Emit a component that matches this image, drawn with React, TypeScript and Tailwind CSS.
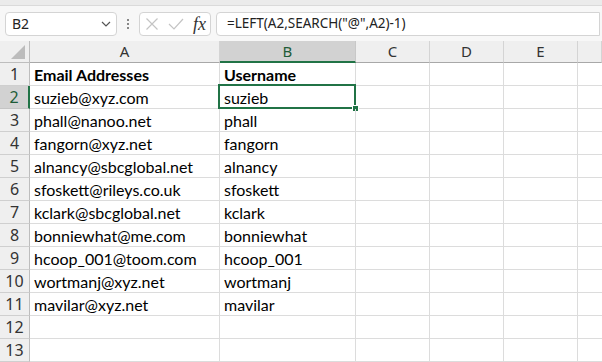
import React from "react";

const rows: [string, string][] = [
  ["Email Addresses", "Username"],
  ["suzieb@xyz.com", "suzieb"],
  ["phall@nanoo.net", "phall"],
  ["fangorn@xyz.net", "fangorn"],
  ["alnancy@sbcglobal.net", "alnancy"],
  ["sfoskett@rileys.co.uk", "sfoskett"],
  ["kclark@sbcglobal.net", "kclark"],
  ["bonniewhat@me.com", "bonniewhat"],
  ["hcoop_001@toom.com", "hcoop_001"],
  ["wortmanj@xyz.net", "wortmanj"],
  ["mavilar@xyz.net", "mavilar"],
  ["", ""],
  ["", ""],
];

const uiFont = { fontFamily: '"Noto Sans", "Open Sans", sans-serif' };
const cellFont = { fontFamily: 'Lato, "Noto Sans", sans-serif' };

export default function App() {
  return (
    <div className="w-[602px] h-[362px] overflow-hidden bg-white text-[#222]">
      <div className="h-[6px] bg-[#ebebeb] border-b border-[#dadada]" />
      <div className="h-[35px] bg-[#f7f7f7] flex items-center pl-[5px] pr-[2px]" style={uiFont}>
        <div className="w-[112px] h-[24px] bg-white border border-[#d4d4d4] rounded-[4px] flex items-center justify-between pl-[6px] pr-[5px]">
          <span className="text-[14px] text-[#222]">B2</span>
          <svg width="10" height="6" viewBox="0 0 10 6">
            <path d="M1 1 L5 5 L9 1" fill="none" stroke="#555" strokeWidth="1.2" />
          </svg>
        </div>
        <div className="w-[22px] flex flex-col items-center gap-[2px]">
          <span className="w-[2px] h-[2px] bg-[#888]" />
          <span className="w-[2px] h-[2px] bg-[#888]" />
          <span className="w-[2px] h-[2px] bg-[#888]" />
        </div>
        <div className="w-[72px] h-[24px] bg-white border border-[#d4d4d4] rounded-[4px] flex items-center pl-[5px] pr-[4px]">
          <svg width="14" height="14" viewBox="0 0 14 14">
            <path d="M1.5 1.5 L12.5 12.5 M12.5 1.5 L1.5 12.5" stroke="#c4c4c4" strokeWidth="1.2" fill="none" />
          </svg>
          <svg width="16" height="14" viewBox="0 0 16 14" className="ml-[9px]">
            <path d="M1 7 L6 12 L15 2" stroke="#c4c4c4" strokeWidth="1.2" fill="none" />
          </svg>
          <span
            className="ml-auto text-[18px] italic text-[#333] leading-none"
            style={{ fontFamily: '"Liberation Serif", "DejaVu Serif", serif' }}
          >
            fx
          </span>
        </div>
        <div className="ml-[5px] flex-1 h-[24px] bg-white border border-[#d4d4d4] rounded-l-[4px] flex items-center pl-[10px]">
          <span className="text-[13.5px] text-[#222]">=LEFT(A2,SEARCH("@",A2)-1)</span>
        </div>
      </div>
      <div className="grid grid-cols-[30px_190px_136px_74px_74px_74px_1fr]" style={uiFont}>
        <div className="h-[22px] bg-[#efefef] border-r border-b border-[#bdbdbd] relative">
          <svg width="14" height="14" viewBox="0 0 14 14" className="absolute right-[4px] bottom-[3px]">
            <path d="M14 0 L14 14 L0 14 Z" fill="#bcbcbc" />
          </svg>
        </div>
        {["A", "B", "C", "D", "E", ""].map((c) => (
          <div
            key={c || "F"}
            className={
              c === "B"
                ? "h-[22px] bg-[#d2d2d2] border-r border-[#c8c8c8] border-b-2 border-b-[#217346] flex items-center justify-center text-[15px] text-[#1e5c38]"
                : "h-[22px] bg-[#efefef] border-r border-[#d4d4d4] border-b border-b-[#a8a8a8] flex items-center justify-center text-[15px] text-[#333]"
            }
          >
            {c}
          </div>
        ))}
        {rows.map((r, i) => {
          const n = i + 1;
          const sel = n === 2;
          return (
            <React.Fragment key={n}>
              <div
                className={
                  sel
                    ? "h-[23px] bg-[#d2d2d2] border-r-2 border-r-[#217346] border-b border-[#c4c4c4] flex items-center justify-center text-[16px] text-[#1e5c38]"
                    : "h-[23px] bg-[#efefef] border-r border-b border-[#cfcfcf] border-r-[#bdbdbd] flex items-center justify-center text-[16px] text-[#333]"
                }
              >
                {n}
              </div>
              <div
                className={
                  "h-[23px] border-r border-b border-[#dcdcdc] flex items-center pl-[4px] pt-[1px] text-[16px] text-black whitespace-nowrap " +
                  (n === 1 ? "font-bold" : "")
                }
                style={cellFont}
              >
                {r[0]}
              </div>
              <div
                className={
                  "h-[23px] border-r border-b border-[#dcdcdc] flex items-center pl-[4px] pt-[1px] text-[16px] text-black whitespace-nowrap relative " +
                  (n === 1 ? "font-bold" : "")
                }
                style={cellFont}
              >
                {r[1]}
                {sel && (
                  <>
                    <div className="absolute left-[-2px] top-[-2px] right-[-1px] bottom-[-1px] border-2 border-[#217346]" />
                    <div className="absolute right-[-4px] bottom-[-4px] w-[7px] h-[7px] bg-[#217346] border border-white" />
                  </>
                )}
              </div>
              <div className="h-[23px] border-r border-b border-[#dcdcdc]" />
              <div className="h-[23px] border-r border-b border-[#dcdcdc]" />
              <div className="h-[23px] border-r border-b border-[#dcdcdc]" />
              <div className="h-[23px] border-b border-[#dcdcdc]" />
            </React.Fragment>
          );
        })}
      </div>
    </div>
  );
}
